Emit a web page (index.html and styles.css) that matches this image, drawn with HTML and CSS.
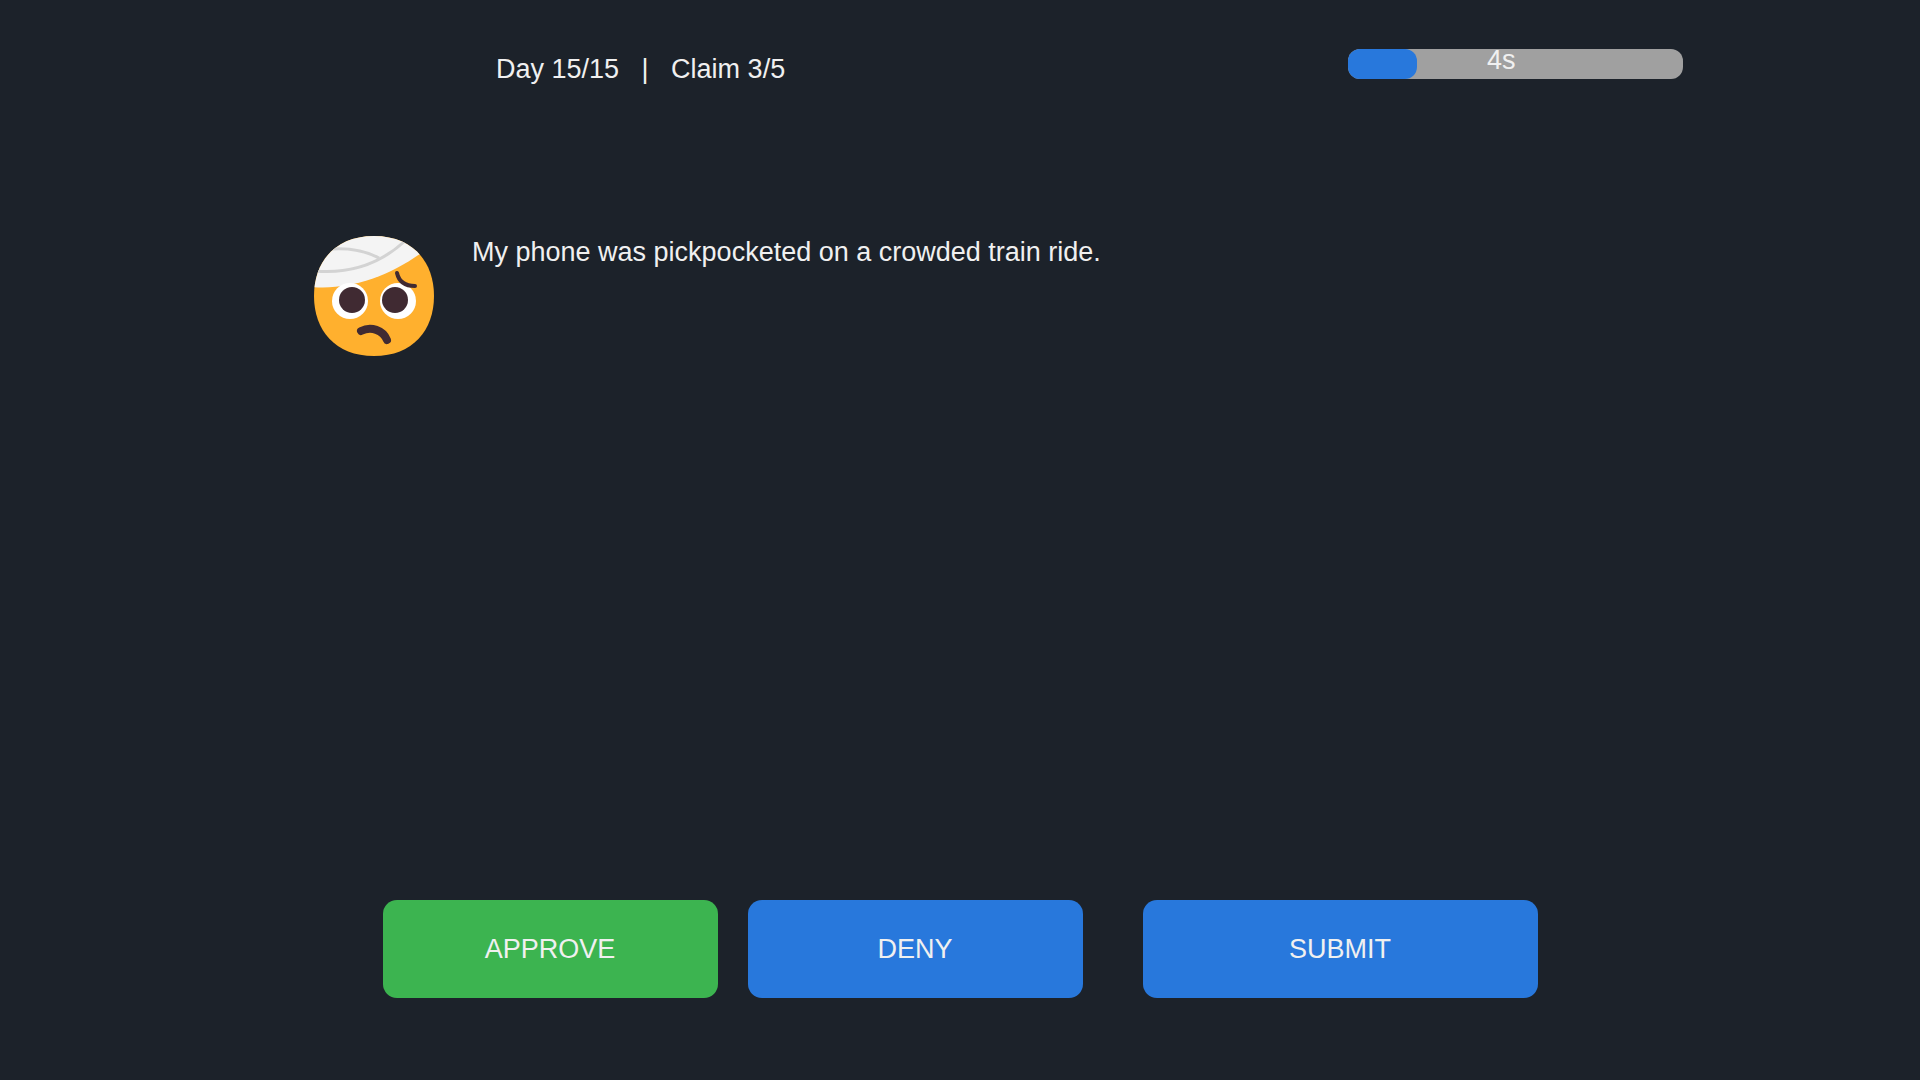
FILE: index.html
```html
<!DOCTYPE html>
<html lang="en">
<head>
<meta charset="utf-8">
<meta name="viewport" content="width=device-width, initial-scale=1">
<title>Claims desk</title>
<link rel="stylesheet" href="styles.css">
</head>
<body>
<header class="status">
  <p class="status-text">Day 15/15 &nbsp; | &nbsp; Claim 3/5</p>
  <div class="timer" role="progressbar" aria-label="Time left" aria-valuemin="0" aria-valuemax="20" aria-valuenow="4">
    <div class="timer-fill" style="width: 20.6%"></div>
    <span class="timer-label">4s</span>
  </div>
</header>
<main class="claim">
  <svg class="avatar" viewBox="0 0 120 120" aria-hidden="true">
    <defs>
      <clipPath id="head"><path d="M60 0C99 0 120 26 120 60S99 120 60 120 0 94 0 60 21 0 60 0Z"/></clipPath>
    </defs>
    <g clip-path="url(#head)">
      <rect width="120" height="120" fill="#ffb02e"/>
      <path d="M-2 51C38 54 76 40 110 15L120 0H0Z" fill="#f4f4f4"/>
      <path d="M1 35C36 38 66 28 91 5M18 13C36 12 52 15 65 22" fill="none" stroke="#d3d3d3" stroke-width="3"/>
    </g>
    <circle cx="36" cy="65" r="18" fill="#fff"/>
    <circle cx="84" cy="65" r="18" fill="#fff"/>
    <circle cx="38" cy="64" r="13" fill="#402a32"/>
    <circle cx="81" cy="64" r="13" fill="#402a32"/>
    <path d="M83 37C85 46 91 50 101 50" fill="none" stroke="#402a32" stroke-width="4" stroke-linecap="round"/>
    <path d="M47 95C57 90 69 94 73 104" fill="none" stroke="#402a32" stroke-width="8" stroke-linecap="round"/>
  </svg>
  <p class="claim-text">My phone was pickpocketed on a crowded train ride.</p>
</main>
<footer class="actions">
  <button class="button approve" type="button">APPROVE</button>
  <button class="button" type="button">DENY</button>
  <button class="button submit" type="button">SUBMIT</button>
</footer>
</body>
</html>
```
FILE: styles.css
```css
* {
  box-sizing: border-box;
}

body {
  margin: 0;
  min-height: 100vh;
  display: flex;
  flex-direction: column;
  background: #1c222a;
  color: #f0f0f0;
  font-family: "Liberation Sans", Arial, sans-serif;
  font-size: 27px;
  line-height: 40px;
}

p {
  margin: 0;
}

.status {
  display: flex;
  justify-content: space-between;
  align-items: flex-start;
  padding: 49px 237px 0 496px;
}

.timer {
  position: relative;
  width: 335px;
  height: 30px;
  border-radius: 12px;
  background: #a0a0a0;
}

.timer-fill {
  height: 100%;
  border-radius: 12px;
  background: #2878dc;
}

.timer-label {
  position: absolute;
  top: -9px;
  left: 139px;
}

.claim {
  flex: 1;
  display: flex;
  align-items: flex-start;
  gap: 38px;
  padding: 147px 237px 0 314px;
}

.avatar {
  flex: none;
  width: 120px;
  height: 120px;
}

.claim-text {
  margin-top: -4px;
}

.actions {
  display: flex;
  justify-content: center;
  gap: 30px;
  padding: 0 40px 82px;
}

.button {
  width: 335px;
  height: 98px;
  padding: 0;
  border: 0;
  border-radius: 14px;
  background: #2878dc;
  color: inherit;
  font: inherit;
  cursor: pointer;
}

.approve {
  background: #3cb450;
}

.submit {
  width: 395px;
  margin-left: 30px;
}
```
